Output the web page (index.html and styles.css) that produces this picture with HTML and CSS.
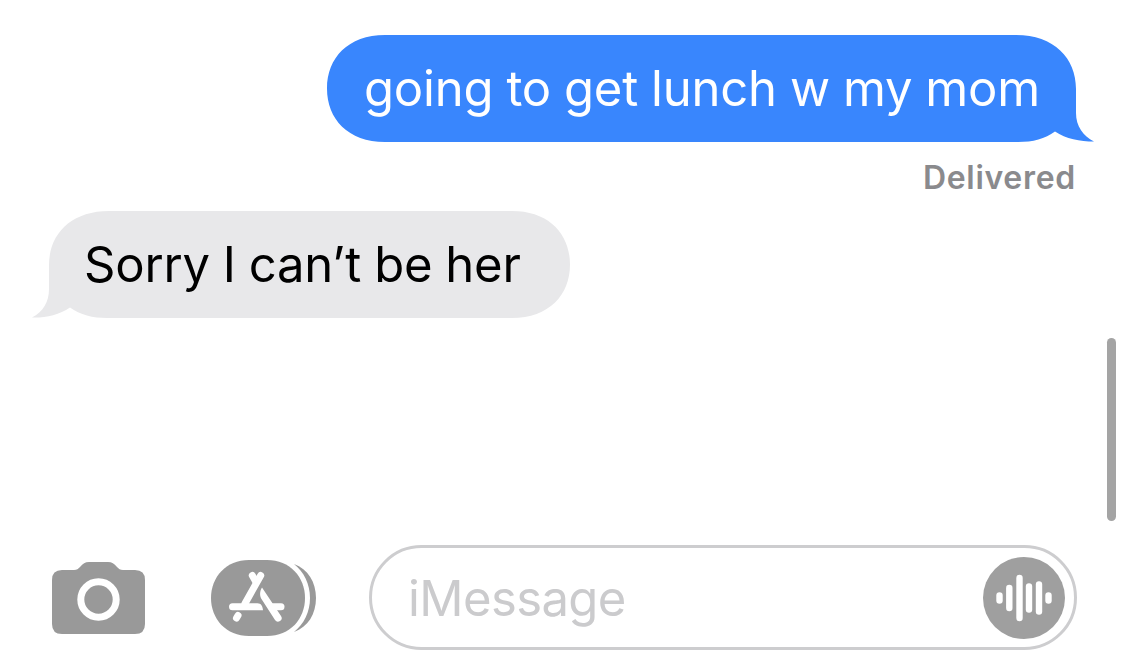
FILE: index.html
```html
<!DOCTYPE html>
<html lang="en">
<head>
    <meta charset="UTF-8">
    <meta name="viewport" content="width=device-width, initial-scale=1.0">
    <title>Messages</title>
    <link rel="stylesheet" href="styles.css">
</head>
<body>
    <div class="app">
        <main class="thread">
            <div class="bubble sent">
                <svg class="bubble-shape" width="767" height="107" viewBox="0 0 767 107">
                    <path d="M58 0H689C727 0 749 23 749 54V78C749 91 756 101 767 106.500C753 106.500 739 104 728 96.500C718 104 706 107 691 107H58C21 107 0 84 0 53.500C0 23 21 0 58 0Z"/>
                </svg>
                <span class="bubble-text">going to get lunch w my mom</span>
            </div>
            <div class="status">Delivered</div>
            <div class="bubble received">
                <svg class="bubble-shape" width="537" height="107" viewBox="0 0 537 107">
                    <path d="M76 0H479C516 0 537 23 537 53.500C537 84 516 107 479 107H74C60 107 47 104 37 96.500C26 104 12 107 -1 106.500C10 101 16 91 16 78V54C16 23 38 0 76 0Z"/>
                </svg>
                <span class="bubble-text">Sorry I can’t be her</span>
            </div>
            <div class="scrollbar"></div>
        </main>

        <footer class="toolbar">
            <button class="icon-btn camera" aria-label="Camera">
                <svg width="93" height="72" viewBox="0 0 93 72">
                    <path fill="#999" d="M10 8H22C25 8 26 7 28 5C31 1.500 33 0 37 0H56C60 0 62 1.500 65 5C67 7 68 8 71 8H83Q93 8 93 18V62Q93 72 83 72H10Q0 72 0 62V18Q0 8 10 8Z"/>
                    <circle cx="46.500" cy="37.500" r="17.700" fill="none" stroke="#fff" stroke-width="7"/>
                </svg>
            </button>
            <button class="icon-btn apps" aria-label="Apps">
                <svg width="106" height="76" viewBox="0 0 106 76">
                    <path fill="#999" d="M38 0H56C79 0 94 17 94 38S79 76 56 76H38C15 76 0 59 0 38S15 0 38 0Z"/>
                    <path fill="#999" d="M83 4C97 9 105 22 105 38S97 67 83 72C93 64 99 52 99 38S93 12 83 4Z"/>
                    <g fill="none" stroke="#fff" stroke-width="7" stroke-linecap="round">
                        <path d="M41.300 15.500L45 22"/>
                        <path d="M49.700 15.500L34 43.500"/>
                        <path d="M27 55.500L25.500 58"/>
                        <path d="M62 46.700H70"/>
                    </g>
                    <path fill="#fff" d="M21.500 43.200H46.500C50 43.200 51.800 46 52 50.200H21.500A3.500 3.500 0 0 1 21.500 43.200Z"/>
                    <path fill="#fff" d="M51 27.500L70 56A3.600 3.600 0 0 1 64 60L50.800 39.500C48.500 36 48.500 31.500 51 27.500Z"/>
                </svg>
            </button>
            <div class="message-field">
                <span class="placeholder">iMessage</span>
                <button class="icon-btn" aria-label="Record audio">
                    <svg width="82" height="82" viewBox="0 0 82 82">
                        <circle cx="41" cy="41" r="41" fill="#9f9f9f"/>
                        <g stroke="#fff" stroke-width="6.400" stroke-linecap="round">
                            <path d="M16.500 38.500V43.500"/>
                            <path d="M26.300 31V51"/>
                            <path d="M36.500 21V61"/>
                            <path d="M46 29.500V52.500"/>
                            <path d="M56 27.500V54.500"/>
                            <path d="M65.500 38.500V43.500"/>
                        </g>
                    </svg>
                </button>
            </div>
        </footer>
    </div>
</body>
</html>
```
FILE: styles.css
```css
* {
    margin: 0;
    padding: 0;
    box-sizing: border-box;
}

body {
    background-color: #fff;
    color: #000;
    font-family: Inter, "Liberation Sans", sans-serif;
    overflow: hidden;
}

.app {
    display: flex;
    flex-direction: column;
    width: 1125px;
    height: 658px;
}

.thread {
    position: relative;
    flex: 1;
    display: flex;
    flex-direction: column;
    padding: 35px 49px 0;
}

.bubble {
    position: relative;
    height: 107px;
    padding: 0 36px;
    font-size: 49px;
    line-height: 107px;
    white-space: nowrap;
}

.bubble-shape {
    position: absolute;
    top: 0;
    overflow: visible;
}

.bubble-text {
    position: relative;
}

.sent {
    align-self: flex-end;
    width: 749px;
    padding-left: 37px;
    color: #fff;
    letter-spacing: -0.2px;
    word-spacing: -0.5px;
}

.sent .bubble-shape {
    left: 0;
    fill: #3986fd;
}

.received {
    align-self: flex-start;
    width: 521px;
    padding-left: 35px;
    letter-spacing: -0.2px;
    word-spacing: -0.6px;
}

.received .bubble-shape {
    left: -16px;
    fill: #e8e8ea;
}

.status {
    height: 69px;
    color: #8a8a8d;
    font-size: 32px;
    font-weight: 600;
    letter-spacing: 0.7px;
    line-height: 71px;
    text-align: right;
}

/* scroll indicator floats over the thread */
.scrollbar {
    position: absolute;
    top: 338px;
    right: 9px;
    width: 9px;
    height: 183px;
    border-radius: 5px;
    background-color: #a4a4a4;
}

.toolbar {
    display: flex;
    align-items: center;
    height: 105px;
    margin-bottom: 8px;
    padding: 0 48px 0 52px;
}

.icon-btn {
    display: block;
    border: none;
    background: none;
}

.icon-btn svg {
    display: block;
}

.camera {
    margin-right: 66px;
}

.apps {
    margin-right: 52px;
}

.message-field {
    flex: 1;
    display: flex;
    align-items: center;
    justify-content: space-between;
    height: 105px;
    padding: 0 9px 0 36px;
    border: 3px solid #cdcdcf;
    border-radius: 53px;
}

.placeholder {
    padding-top: 2px;
    color: #cbcbcd;
    font-size: 49px;
    letter-spacing: -0.6px;
}
```
